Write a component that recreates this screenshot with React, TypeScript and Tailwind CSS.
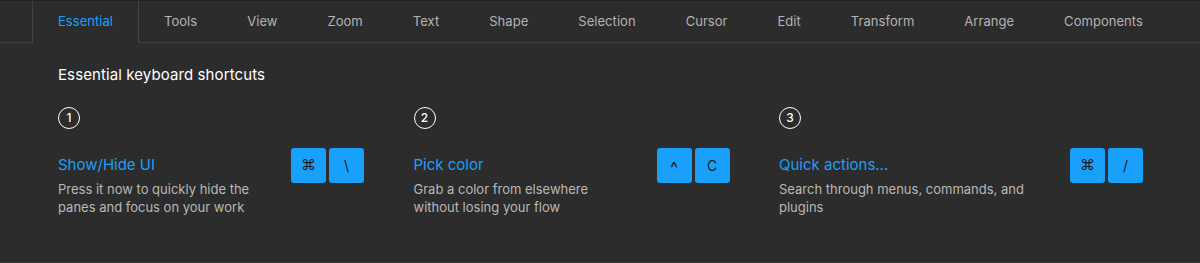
import React from 'react';

const tabs = [
  'Essential',
  'Tools',
  'View',
  'Zoom',
  'Text',
  'Shape',
  'Selection',
  'Cursor',
  'Edit',
  'Transform',
  'Arrange',
  'Components',
];

interface Shortcut {
  num: number;
  name: string;
  desc: string;
  keys: string[];
}

const shortcuts: Shortcut[] = [
  {
    num: 1,
    name: 'Show/Hide UI',
    desc: 'Press it now to quickly hide the panes and focus on your work',
    keys: ['⌘', '\\'],
  },
  {
    num: 2,
    name: 'Pick color',
    desc: 'Grab a color from elsewhere without losing your flow',
    keys: ['^', 'C'],
  },
  {
    num: 3,
    name: 'Quick actions...',
    desc: 'Search through menus, commands, and plugins',
    keys: ['⌘', '/'],
  },
];

const keyClass = (k: string) => {
  if (k === '⌘') return 'text-[15px]';
  if (k === '^') return 'text-[17px] leading-none translate-y-[3px]';
  return 'text-[14px]';
};

const ShortcutCard: React.FC<{ item: Shortcut }> = ({ item }) => {
  return (
    <div className="flex flex-col">
      <div className="w-[22px] h-[22px] rounded-full border-[1.5px] border-white flex items-center justify-center text-white text-[12px] font-medium leading-none">
        {item.num}
      </div>
      <div className="mt-[19px] flex items-start justify-between gap-[28px]">
        <div className="pt-[7px] min-w-0">
          <div className="text-[15px] leading-[20px] text-[#18a0fb]">{item.name}</div>
          <div className="mt-[5px] text-[13px] leading-[18px] text-[#b8b8b8]">{item.desc}</div>
        </div>
        <div className="flex gap-[3px] shrink-0">
          {item.keys.map((k, i) => (
            <div
              key={i}
              className="w-[35px] h-[35px] rounded-[3px] bg-[#18a0fb] flex items-center justify-center text-[#1b1b1b]"
            >
              <span className={keyClass(k)}>{k}</span>
            </div>
          ))}
        </div>
      </div>
    </div>
  );
};

export default function App() {
  return (
    <div
      className="w-[1200px] h-[263px] bg-[#2c2c2c] border-b border-[#3a3a3a] overflow-hidden"
      style={{ fontFamily: 'Inter, "Noto Sans", sans-serif' }}
    >
      {/* tab strip */}
      <div className="flex h-[43px] border-t border-[#222222]">
        <div className="w-[32px] border-b border-[#3e3e3e]" />
        {tabs.map((t, i) =>
          i === 0 ? (
            <div
              key={t}
              className="px-[25px] flex items-center border-x border-[#444444] text-[13px] tracking-[0.04px] text-[#18a0fb]"
            >
              {t}
            </div>
          ) : (
            <div
              key={t}
              className="px-[25px] flex items-center border-b border-[#3e3e3e] text-[13px] tracking-[0.04px] text-[#b3b3b3]"
            >
              {t}
            </div>
          )
        )}
        <div className="flex-1 border-b border-[#3e3e3e]" />
      </div>

      <div className="pl-[58px] pt-[22px]">
        <div className="text-[15px] leading-[20px] tracking-[0.1px] text-white">Essential keyboard shortcuts</div>
        <div className="mt-[22px] grid grid-cols-[306px_316px_364px] gap-x-[49.5px]">
          {shortcuts.map((s) => (
            <ShortcutCard key={s.num} item={s} />
          ))}
        </div>
      </div>
    </div>
  );
}
